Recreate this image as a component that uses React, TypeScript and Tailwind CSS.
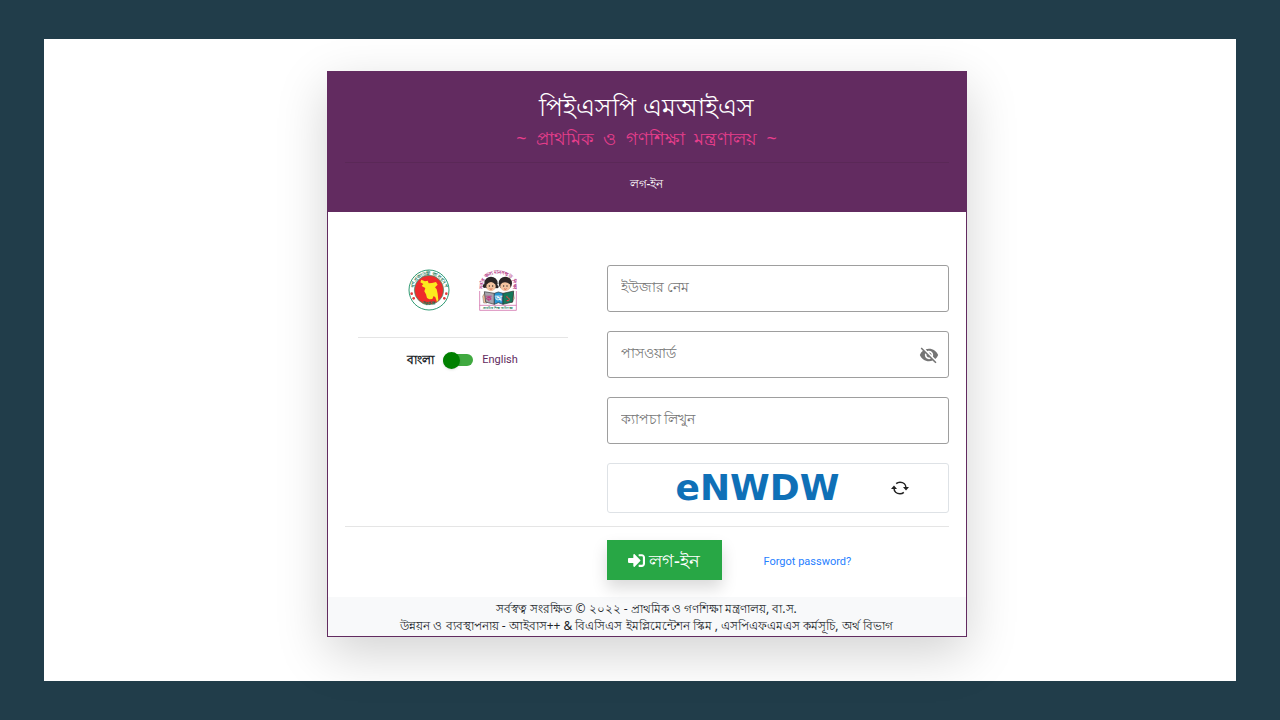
import { useState } from 'react';
import { MdVisibility, MdVisibilityOff } from 'react-icons/md';

const FIELD_CLASS =
  'block h-[47px] w-full rounded-[3px] border border-[#9e9e9e] bg-white px-[13px] pb-1 text-sm text-gray-800 placeholder:text-[#757575] outline-none focus:border-[#622b60]';

function GovernmentSeal() {
  return (
    <svg viewBox="0 0 126 126" className="size-[42px]" role="img" aria-label="গণপ্রজাতন্ত্রী বাংলাদেশ সরকার">
      <defs>
        <path id="seal-top" d="M17 74 A47 47 0 1 1 109 74" />
        <path id="seal-bottom" d="M24 92 A55 55 0 0 0 102 92" />
      </defs>
      <circle cx="63" cy="63" r="60" fill="#fff" stroke="#2f9a73" strokeWidth="3" />
      <circle cx="63" cy="63" r="44" fill="#ee2b2b" stroke="#2f9a73" strokeWidth="2" />
      <path
        d="M40 32 L51 37 L59 35 L62 43 L72 42 L84 39 L89 47 L81 55 L86 61 L89 74 L91 93 L87 99 L82 85 L77 81 L73 90 L64 91 L57 87 L54 76 L49 67 L52 57 L41 51 L46 45 L37 40 Z"
        fill="#fcea1e"
      />
      <text fontSize="14" fontWeight="700" fill="#167a55">
        <textPath href="#seal-top" startOffset="50%" textAnchor="middle">
          গণপ্রজাতন্ত্রী বাংলাদেশ
        </textPath>
      </text>
      <text fontSize="14" fontWeight="700" fill="#167a55">
        <textPath href="#seal-bottom" startOffset="50%" textAnchor="middle">
          সরকার
        </textPath>
      </text>
      <g fill="#e33b3b">
        <circle cx="11" cy="74" r="4" />
        <circle cx="17" cy="88" r="4" />
        <circle cx="115" cy="74" r="4" />
        <circle cx="109" cy="88" r="4" />
      </g>
    </svg>
  );
}

function PrimaryEducationLogo() {
  return (
    <svg viewBox="0 0 114 126" className="h-[42px] w-[38px]" role="img" aria-label="প্রাথমিক শিক্ষা অধিদপ্তর">
      <defs>
        <path id="edu-arc" d="M14 78 C3 30 28 15 57 15 C86 15 111 30 100 78" />
      </defs>
      <path d="M2 66 V124 H112 V66 M2 109 H112" fill="none" stroke="#c8559b" strokeWidth="2" />
      <text fontSize="15" fontWeight="700" fill="#b0307f">
        <textPath href="#edu-arc" startOffset="50%" textAnchor="middle">
          সবার জন্য মানসম্মত শিক্ষা
        </textPath>
      </text>
      {/* girl */}
      <circle cx="17" cy="51" r="6" fill="#2b2526" />
      <circle cx="54" cy="53" r="5" fill="#2b2526" />
      <circle cx="36" cy="43" r="20" fill="#2b2526" />
      <ellipse cx="36" cy="52" rx="14" ry="15" fill="#f3c3a0" />
      <path d="M22 47 Q36 31 50 47 L46 34 L26 34 Z" fill="#2b2526" />
      {/* boy */}
      <circle cx="79" cy="43" r="20" fill="#2b2526" />
      <ellipse cx="79" cy="52" rx="15" ry="15" fill="#f3c3a0" />
      <path d="M63 47 Q77 33 95 47 L90 36 L68 36 Z" fill="#2b2526" />
      <g fill="#2b2526">
        <circle cx="31" cy="51" r="2" />
        <circle cx="41" cy="51" r="2" />
        <circle cx="74" cy="51" r="2" />
        <circle cx="84" cy="51" r="2" />
      </g>
      <path d="M32 59 Q36 63 40 59 M75 59 Q79 63 83 59" fill="none" stroke="#c0392b" strokeWidth="2" />
      {/* hands behind the books */}
      <path d="M11 82 L18 70 L24 102 H14 Z M103 70 L106 88 L98 102 Z" fill="#f3c3a0" stroke="#333" strokeWidth="1" />
      {/* books */}
      <path d="M16 68 L46 73 V106 L20 99 Z" fill="#a6a4ad" stroke="#333" strokeWidth="2" />
      <path d="M46 73 L58 69 L72 73 V106 L58 101 L46 106 Z" fill="#2695d3" stroke="#333" strokeWidth="2" />
      <path d="M72 73 L104 66 L101 99 L72 106 Z" fill="#14795a" stroke="#333" strokeWidth="2" />
      <g fontSize="24" fontWeight="700">
        <text x="22" y="97" fill="#c12f7d">ক</text>
        <text x="48" y="97" fill="#fff">অ</text>
        <text x="78" y="96" fill="#e83a3a">১</text>
      </g>
      <text x="57" y="121" textAnchor="middle" fontSize="10" fontWeight="700" fill="#167a55">
        প্রাথমিক শিক্ষা অধিদপ্তর
      </text>
    </svg>
  );
}

function RefreshIcon() {
  return (
    <svg viewBox="0 0 18 14" className="h-[14px] w-[18px]" aria-hidden="true">
      <g fill="none" stroke="#212121" strokeWidth="1.5">
        <path d="M3 7 C3 10.500 5.500 12.800 9 12.800 C10.500 12.800 11.800 12.300 12.800 11.400" />
        <path d="M15 7 C15 3.500 12.500 1.200 9 1.200 C7.500 1.200 6.200 1.700 5.200 2.600" />
      </g>
      <path d="M0 8 H6 L3 4.500 Z M12 6 H18 L15 9.500 Z" fill="#212121" />
    </svg>
  );
}

function SignInIcon() {
  return (
    <svg viewBox="0 0 512 512" className="size-[17px]" fill="currentColor" aria-hidden="true">
      <path d="M416 448h-84c-6.600 0-12-5.400-12-12v-40c0-6.600 5.400-12 12-12h84c17.700 0 32-14.300 32-32V160c0-17.700-14.300-32-32-32h-84c-6.600 0-12-5.400-12-12V76c0-6.600 5.400-12 12-12h84c53 0 96 43 96 96v192c0 53-43 96-96 96zm-47-209L201 71c-15-15-41-4.500-41 17v96H24c-13.300 0-24 10.700-24 24v96c0 13.300 10.700 24 24 24h136v96c0 21.500 26 32 41 17l168-168c9.300-9.400 9.300-24.600 0-34z" />
    </svg>
  );
}

export default function App() {
  const [showPassword, setShowPassword] = useState(false);

  return (
    <div className="min-h-screen bg-[#213d4a] px-11 py-[39px] font-['Noto_Sans','Open_Sans',sans-serif] text-[#212529]">
      <main className="bg-white pt-8 pb-11 pl-[13px]">
        <div className="mx-auto max-w-[640px] border border-[#622b60] bg-white shadow-[0_16px_48px_rgba(0,0,0,0.18)]">
          <header className="bg-[#622b60] px-[17px] pb-[19px] pt-4 text-center text-white">
            <h1 className="text-[25px] leading-9 font-medium">পিইএসপি এমআইএস</h1>
            <p className="text-lg leading-7 whitespace-pre-wrap text-[#e83e8c]">
              {'~  প্রাথমিক  ও  গণশিক্ষা  মন্ত্রণালয়  ~'}
            </p>
            <hr className="mt-[10px] border-[#5a2857]" />
            <h2 className="mt-3 text-xs leading-[18px] font-medium">লগ-ইন</h2>
          </header>

          <form onSubmit={(e) => e.preventDefault()}>
            <div className="px-[17px] pt-[53px]">
              <div className="grid grid-cols-[262px_1fr]">
                <div className="pl-[13px] pr-[39px]">
                  <div className="flex justify-center gap-[29px] pt-1">
                    <GovernmentSeal />
                    <PrimaryEducationLogo />
                  </div>
                  <hr className="mt-[26px] border-[#e5e5e5]" />
                  <label className="mt-3 flex items-center justify-center gap-[9px] text-xs leading-5">
                    <span className="font-bold">বাংলা</span>
                    <input
                      type="checkbox"
                      role="switch"
                      className="relative h-3 w-[30px] appearance-none rounded-full bg-[#40a940] before:absolute before:-top-[2px] before:left-0 before:size-[17px] before:rounded-full before:bg-[#008000] before:shadow before:content-[''] checked:before:left-[13px]"
                    />
                    <span className="font-['Roboto','Noto_Sans',sans-serif] text-[11px] text-[#622b60]">English</span>
                  </label>
                </div>

                <div className="flex flex-col gap-[19px]">
                  <input type="text" aria-label="ইউজার নেম" placeholder="ইউজার নেম" className={FIELD_CLASS} />
                  <div className="relative">
                    <input
                      type={showPassword ? 'text' : 'password'}
                      aria-label="পাসওয়ার্ড"
                      placeholder="পাসওয়ার্ড"
                      className={FIELD_CLASS}
                    />
                    <button
                      type="button"
                      aria-label="পাসওয়ার্ড দেখুন"
                      onClick={() => setShowPassword(!showPassword)}
                      className="absolute inset-y-0 right-[10px] cursor-pointer text-[#757575]"
                    >
                      {showPassword ? <MdVisibility size={20} /> : <MdVisibilityOff size={20} />}
                    </button>
                  </div>
                  <input type="text" aria-label="ক্যাপচা লিখুন" placeholder="ক্যাপচা লিখুন" className={FIELD_CLASS} />
                  <div className="flex h-[50px] items-center justify-end gap-3 rounded-[3px] border border-[#dee2e6] pr-[39px] pl-[29px]">
                    <span className="flex-1 text-center font-['DejaVu_Sans'] text-4xl leading-none font-bold text-[#0f70b7]">
                      eNWDW
                    </span>
                    <button type="button" aria-label="নতুন ক্যাপচা" className="cursor-pointer">
                      <RefreshIcon />
                    </button>
                  </div>
                </div>
              </div>

              <hr className="mt-[13px] border-[#e5e5e5]" />

              <div className="flex items-center gap-[42px] pb-[17px] pl-[262px] pt-[13px]">
                <button
                  type="submit"
                  className="flex h-10 w-[115px] cursor-pointer items-center justify-center gap-1 bg-[#28a745] text-lg font-medium text-white shadow-[0_8px_16px_rgba(0,0,0,0.15)]"
                >
                  <SignInIcon />
                  লগ-ইন
                </button>
                <a href="#" className="pt-1 font-['Roboto','Noto_Sans',sans-serif] text-[11px] text-[#2680ff]">
                  Forgot password?
                </a>
              </div>
            </div>
          </form>

          <footer className="bg-[#f8f9fa] pt-[3px] pb-[2px] text-center text-xs leading-[17px]">
            <p>সর্বস্বত্ব সংরক্ষিত © ২০২২ - প্রাথমিক ও গণশিক্ষা মন্ত্রণালয়, বা.স.</p>
            <p>উন্নয়ন ও ব্যবস্থাপনায় - আইবাস++ &amp; বিএসিএস ইমপ্লিমেন্টেশন স্কিম , এসপিএফএমএস কর্মসূচি, অর্থ বিভাগ</p>
          </footer>
        </div>
      </main>
    </div>
  );
}
